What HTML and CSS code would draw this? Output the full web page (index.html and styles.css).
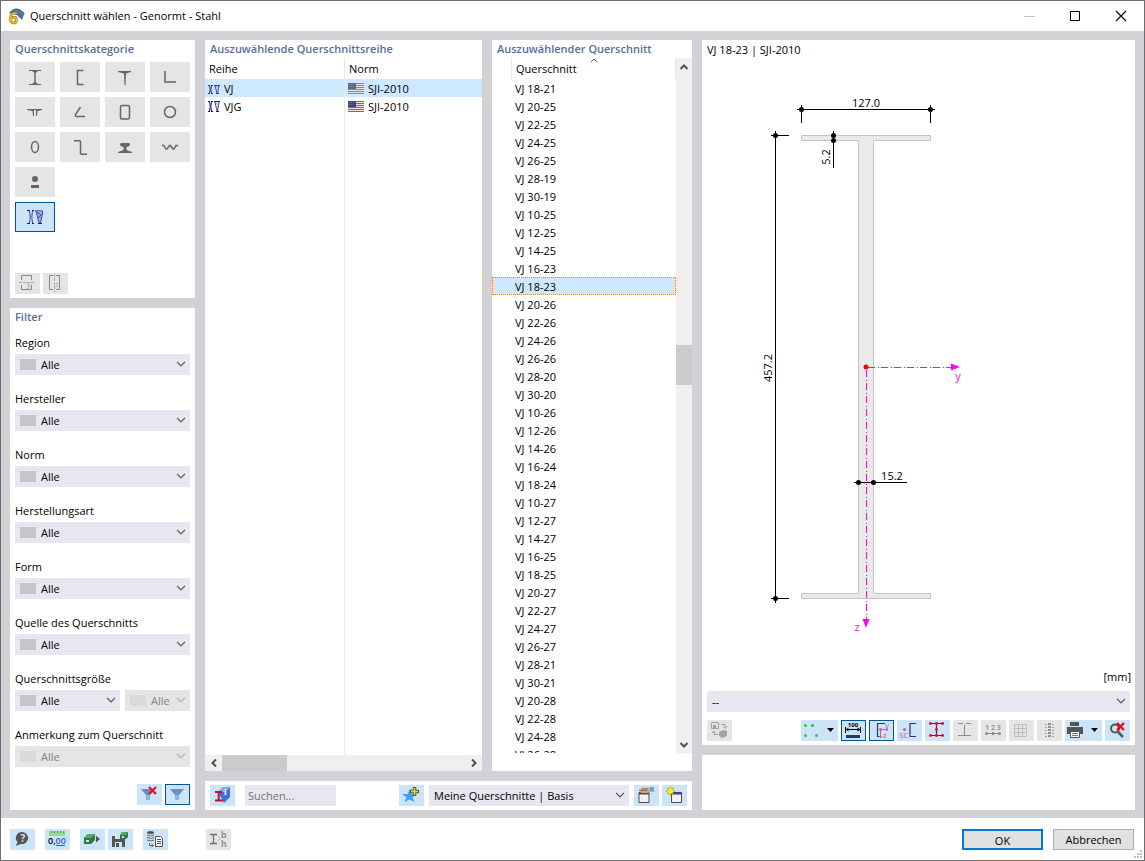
FILE: index.html
```html
<!DOCTYPE html>
<html lang="de">
<head>
    <meta charset="UTF-8">
    <meta name="viewport" content="width=device-width, initial-scale=1.0">
    <title>Querschnitt wählen - Genormt - Stahl</title>
    <link rel="stylesheet" href="styles.css">
</head>
<body>
    <svg class="defs" aria-hidden="true">
        <symbol id="chevron" viewBox="0 0 10 6"><path d="M1 .8 5 4.8 9 .8" fill="none" stroke="currentColor" stroke-width="1.2"/></symbol>
        <symbol id="arrow" viewBox="0 0 10 10"><path d="M1.5 7 5 3.500 8.500 7" fill="none" stroke="#505050" stroke-width="2"/></symbol>
        <symbol id="flag" viewBox="0 0 16 11">
            <path fill="#f3e3e6" d="M0 0h16v11H0z"/>
            <path stroke="#cf4653" d="M0 .5h16M0 2.500h16M0 4.500h16M0 6.500h16M0 8.500h16M0 10.500h16"/>
            <path fill="#3b4a7d" d="M0 0h8v6H0z"/>
            <path stroke="#66739c" stroke-dasharray="1 1" d="M1 1.500h6M1 3.500h6"/>
        </symbol>
        <symbol id="joist" viewBox="0 0 12 11" preserveAspectRatio="none">
            <path stroke="#14148c" fill="none" d="M0 .5h2M3 .5h2M0 10.500h2M3 10.500h2M6 .5h6M8 10.500h3"/>
            <path stroke="#14148c" fill="none" d="M1.500 1Q3 5.500 1.500 10M3.500 1Q2 5.500 3.500 10"/>
            <path stroke="#3c3ca4" fill="none" d="M7 1l2 9M11 1l-1.500 9"/>
            <path stroke="#8a92d4" fill="none" d="M8 1.500l2.500 3L8.500 7"/>
        </symbol>
    </svg>

    <div class="window">
        <header class="titlebar">
            <svg width="17" height="17" viewBox="0 0 17 17">
                <path d="M1 5Q8-4 16.500 5L14 12 9 7Z" fill="#3c68a8"/>
                <path d="M3 5Q9-1 15 7M8 2l6 7M11 1l5 6" stroke="#6d7f96" fill="none"/>
                <text x="1" y="16" class="six">6</text>
            </svg>
            <h1>Querschnitt wählen - Genormt - Stahl</h1>
            <button class="sys" aria-label="Minimieren"><svg width="12" height="12"><path d="M1 6.500h11" stroke="#c4c4c4"/></svg></button>
            <button class="sys" aria-label="Maximieren"><svg width="12" height="12"><path d="M1.500 1.500h9v9h-9z" fill="none" stroke="#000"/></svg></button>
            <button class="sys" aria-label="Schließen"><svg width="12" height="12"><path d="M1 1l10 10M11 1 1 11" stroke="#000" stroke-width="1.100"/></svg></button>
        </header>

        <main class="content">
            <div class="column">
                <section class="panel padded">
                    <h2>Querschnittskategorie</h2>
                    <div class="categories">
                        <button aria-label="I-Profil"><svg viewBox="0 0 40 30"><path d="M14 8.500h12M14 22.500h12" class="s"/><path d="M20 9v13" class="s w2"/><path d="M17 9h6l-2.500 2h-1zM17 22h6l-2.500-2h-1z" class="f"/></svg></button>
                        <button aria-label="U-Profil"><svg viewBox="0 0 40 30"><path d="M23.500 8.500h-6v14h6" class="s w2"/></svg></button>
                        <button aria-label="T-Profil"><svg viewBox="0 0 40 30"><path d="M13 9h13v1l-5 1.500-.5 11.500h-1L19 11.500 13 10z" class="f"/></svg></button>
                        <button aria-label="Winkel"><svg viewBox="0 0 40 30"><path d="M15 9v11h11" class="s w2"/></svg></button>
                        <button aria-label="Doppel-T"><svg viewBox="0 0 40 30"><path d="M12 12h15v1l-4.500 1-.5 5h-1v-6h-2v6h-1l-.5-5-5.500-1z" class="f"/></svg></button>
                        <button aria-label="Kantprofil"><svg viewBox="0 0 40 30"><path d="M20.500 10 15.500 17.500q-.5 2 1 2H25" class="s w2"/></svg></button>
                        <button aria-label="Hohlprofil"><svg viewBox="0 0 40 30"><rect x="15.500" y="8.500" width="9" height="13.500" rx="1.500" class="s w2"/></svg></button>
                        <button aria-label="Rohr"><svg viewBox="0 0 40 30"><circle cx="20" cy="15" r="5.500" class="s w2"/></svg></button>
                        <button aria-label="Ovalrohr"><svg viewBox="0 0 40 30"><ellipse cx="20" cy="15" rx="3.500" ry="5.500" class="s w2"/></svg></button>
                        <button aria-label="Z-Profil"><svg viewBox="0 0 40 30"><path d="M14 8.800h5.500q1 0 1 1v11.500q0 1 1 1H27" class="s w2"/></svg></button>
                        <button aria-label="Schiene"><svg viewBox="0 0 40 30"><path d="M16 11h8q1 0 1 1.500t-1.500 2L21.500 15v3l5.500 2v1H13v-1l5.500-2v-3L16.500 14.500Q15 14 15 12.500T16 11z" class="f"/></svg></button>
                        <button aria-label="Wellblech"><svg viewBox="0 0 40 30"><path d="M12 13.500h2l2 3.500h1l2.500-3.500h1L23 17h1l2-3.500H28" class="s w2"/></svg></button>
                        <button aria-label="Vollprofil"><svg viewBox="0 0 40 30"><circle cx="20" cy="12" r="3" class="f"/><path d="M16 18h8v3h-8z" class="f"/></svg></button>
                        <button aria-label="Stahlträger" class="newline active"><svg viewBox="0 0 40 30">
                            <path d="M14.500 9Q16 15 14.500 21M17.500 9Q16 15 17.500 21" stroke="#4148a8" fill="none"/>
                            <path d="M12 8.500h3M17 8.500h2M12 21.500h3M17 21.500h2M20 9h8M23 21.500h4" stroke="#14148c"/>
                            <path d="M21.500 9l2.500 12h2l1.500-12z" fill="#9aa4de"/>
                            <path d="M21 9l3 12M27.500 9v3l-2 9M22 10l4 3-3 3" stroke="#4148a8" fill="none"/>
                        </svg></button>
                    </div>
                    <div class="tools mirror">
                        <button class="tool off" disabled aria-label="Spiegeln y"><svg viewBox="0 0 25 21"><path d="M6.500 7V2.500h10V7M6.500 12v4.500h10V12" class="g dark"/><path d="M4 9.500h16" class="g" stroke-dasharray="3 1"/><text x="12" y="14" class="tiny">y</text></svg></button>
                        <button class="tool off" disabled aria-label="Spiegeln z"><svg viewBox="0 0 25 21"><path d="M10 2.500H6.500v14H10M13 2.500h3.500v14H13" class="g dark"/><path d="M11.500 1v18" class="g" stroke-dasharray="3 1"/><text x="12" y="14" class="tiny">z</text></svg></button>
                    </div>
                </section>

                <section class="panel padded filter">
                    <h2>Filter</h2>
                    <div class="field">
                        <label for="region">Region</label>
                        <div class="combo swatch"><select id="region"><option>Alle</option></select><svg><use href="#chevron"/></svg></div>
                    </div>
                    <div class="field">
                        <label for="hersteller">Hersteller</label>
                        <div class="combo swatch"><select id="hersteller"><option>Alle</option></select><svg><use href="#chevron"/></svg></div>
                    </div>
                    <div class="field">
                        <label for="norm">Norm</label>
                        <div class="combo swatch"><select id="norm"><option>Alle</option></select><svg><use href="#chevron"/></svg></div>
                    </div>
                    <div class="field">
                        <label for="art">Herstellungsart</label>
                        <div class="combo swatch"><select id="art"><option>Alle</option></select><svg><use href="#chevron"/></svg></div>
                    </div>
                    <div class="field">
                        <label for="form">Form</label>
                        <div class="combo swatch"><select id="form"><option>Alle</option></select><svg><use href="#chevron"/></svg></div>
                    </div>
                    <div class="field">
                        <label for="quelle">Quelle des Querschnitts</label>
                        <div class="combo swatch"><select id="quelle"><option>Alle</option></select><svg><use href="#chevron"/></svg></div>
                    </div>
                    <div class="field">
                        <label for="groesse">Querschnittsgröße</label>
                        <div class="pair">
                            <div class="combo swatch"><select id="groesse"><option>Alle</option></select><svg><use href="#chevron"/></svg></div>
                            <div class="combo swatch disabled"><select aria-label="Querschnittsgröße Wert" disabled><option>Alle</option></select><svg><use href="#chevron"/></svg></div>
                        </div>
                    </div>
                    <div class="field">
                        <label for="anmerkung">Anmerkung zum Querschnitt</label>
                        <div class="combo swatch disabled"><select id="anmerkung" disabled><option>Alle</option></select><svg><use href="#chevron"/></svg></div>
                    </div>
                    <div class="tools filter-tools">
                        <button class="tool" aria-label="Filter löschen"><svg viewBox="0 0 25 21"><path d="M4 5h14l-5 6v5h-4v-5z" fill="#6d8dc0"/><path d="M9 11h4v5H9z" fill="#8fb3e6"/><path d="M12 3l7 7M19 3l-7 7" stroke="#e8101c" stroke-width="2.200"/></svg></button>
                        <button class="tool active" aria-label="Filter"><svg viewBox="0 0 25 21"><path d="M5 5h14l-5 6v5h-4v-5z" fill="#6d8dc0"/><path d="M10 11h4v5h-4z" fill="#8fb3e6"/></svg></button>
                    </div>
                </section>
            </div>

            <div class="column">
                <div class="lists">
                    <section class="panel">
                        <h2 class="indent">Auszuwählende Querschnittsreihe</h2>
                        <table class="series">
                            <thead><tr><th>Reihe</th><th>Norm</th></tr></thead>
                            <tbody>
                                <tr class="selected">
                                    <td><svg width="12" height="9"><use href="#joist"/></svg>VJ</td>
                                    <td><svg width="16" height="11" class="tinted"><use href="#flag"/></svg>SJI-2010</td>
                                </tr>
                                <tr>
                                    <td><svg width="12" height="11"><use href="#joist"/></svg>VJG</td>
                                    <td><svg width="16" height="11"><use href="#flag"/></svg>SJI-2010</td>
                                </tr>
                                <tr class="rest"><td></td><td></td></tr>
                            </tbody>
                        </table>
                        <div class="scroll-x">
                            <button aria-label="Nach links"><svg class="left"><use href="#arrow"/></svg></button>
                            <div class="thumb"></div>
                            <div></div>
                            <button aria-label="Nach rechts"><svg class="right"><use href="#arrow"/></svg></button>
                        </div>
                    </section>

                    <section class="panel">
                        <h2 class="indent">Auszuwählender Querschnitt</h2>
                        <div class="list">
                            <div class="list-view">
                                <table class="sections">
                                    <thead><tr><th></th><th>Querschnitt<svg class="sort"><use href="#chevron"/></svg></th></tr></thead>
                                    <tbody id="rows"></tbody>
                                </table>
                            </div>
                            <div class="scroll-y">
                                <button aria-label="Nach oben"><svg><use href="#arrow"/></svg></button>
                                <div></div>
                                <div class="thumb"></div>
                                <div></div>
                                <button aria-label="Nach unten"><svg class="down"><use href="#arrow"/></svg></button>
                            </div>
                        </div>
                    </section>
                </div>

                <section class="panel searchbar">
                    <button class="tool" aria-label="Info"><svg viewBox="0 0 25 21"><path d="M8 7l5-5h7v10l-6 6z" fill="#3f6fd8"/><path d="M8 7l5-5h7l-4 5z" fill="#85a9ef"/><path d="M5 7h7M5 15.500h8M8.700 7v9" stroke="#c8141e" stroke-width="2" fill="none"/><text x="14" y="10" class="info">i</text></svg></button>
                    <input type="text" class="search" placeholder="Suchen..." aria-label="Suchen">
                    <button class="tool" aria-label="Favorit hinzufügen"><svg viewBox="0 0 25 21"><path d="M10.500 4l1.800 5H18l-4.500 3.200 2 5-5-3-5 3 1.800-5L3 9h5.700z" fill="#3ea2f4"/><path d="M15.500 2v9M11 6.500h9" stroke="#5e5724" stroke-width="3.400"/><path d="M15.500 3v7M12 6.500h7" stroke="#e6d65a" stroke-width="1.500"/></svg></button>
                    <div class="combo mine"><select aria-label="Meine Querschnitte"><option>Meine Querschnitte | Basis</option></select><svg><use href="#chevron"/></svg></div>
                    <button class="tool" aria-label="Bearbeiten"><svg viewBox="0 0 25 21"><path d="M5 7.500h10v10H5z" fill="#f2f2f2" stroke="#4d4d4d"/><path d="M5 8h10v1.500H5z" fill="#4d4d4d"/><path d="M5 5l4-2.500h6l3 1v3L13 8H7z" fill="#d3a58a"/><path d="M5 5.500h8M7 4h7" stroke="#9b6c55"/><path d="M16 2h4v5l-4-1z" fill="#6d9ed6"/></svg></button>
                    <button class="tool" aria-label="Neu"><svg viewBox="0 0 25 21"><path d="M9.500 7.500h10v10h-10z" fill="#f2f2f2" stroke="#4d4d4d"/><path d="M10 8.500h9" stroke="#3434c8" stroke-width="2"/><path d="M8.500 1.500v9M4 6h9M5.500 3l6 6M11.500 3l-6 6" stroke="#a89a1c" stroke-width="1.500"/><path d="M8.500 2.500v7M5 6h7M6.500 4l4 4M10.500 4l-4 4" stroke="#fff200" stroke-width="1.400"/></svg></button>
                </section>
            </div>

            <div class="column">
                <section class="panel preview">
                    <h3>VJ 18-23 | SJI-2010</h3>
                    <svg class="drawing" viewBox="702 60 433 608">
                        <path class="profile" d="M801.500 135.500h129v5h-57v453h57v5h-129v-5h57v-453h-57z"/>
                        <!-- flange width -->
                        <path class="dim" d="M797 109.500h138M801.500 105v18M930.500 105v18"/>
                        <circle cx="801.500" cy="109.500" r="2.500"/><circle cx="930.500" cy="109.500" r="2.500"/>
                        <text x="866" y="107">127.0</text>
                        <!-- height -->
                        <path class="dim" d="M775.500 131v472M771 135.500h18M771 598.500h18"/>
                        <circle cx="775.500" cy="135.500" r="2.500"/><circle cx="775.500" cy="598.500" r="2.500"/>
                        <text transform="translate(772 368) rotate(-90)">457.2</text>
                        <!-- flange thickness -->
                        <path class="dim" d="M833.500 131v37"/>
                        <circle cx="833.500" cy="135.500" r="2.500"/><circle cx="833.500" cy="140.500" r="2.500"/>
                        <text transform="translate(830 157) rotate(-90)">5.2</text>
                        <!-- axes -->
                        <path class="axis" d="M868 367.500h84M866.500 370v249"/>
                        <path class="head" d="M951 363.500v7l9-3.500zM862.500 619h7l-3.500 9z"/>
                        <circle cx="866" cy="367" r="2.500" class="origin"/>
                        <text x="958" y="380" class="axis-name">y</text>
                        <text x="857" y="631" class="axis-name">z</text>
                        <!-- web thickness -->
                        <path class="dim" d="M854 482.500h53"/>
                        <circle cx="858.500" cy="482.500" r="2.500"/><circle cx="873.500" cy="482.500" r="2.500"/>
                        <text x="892" y="480">15.2</text>
                    </svg>
                    <div class="unit">[mm]</div>
                    <div class="combo stress"><select aria-label="Darstellung"><option>--</option></select><svg><use href="#chevron"/></svg></div>
                    <div class="tools">
                        <button class="tool off" disabled aria-label="Ansicht wechseln"><svg viewBox="0 0 25 21"><path d="M4.500 2.500h7v6h-7z" fill="none" stroke="#a2a2a2"/><path d="M6 5h3v3H6zM12 12l4-2 4 1v5l-5 2-3-2z" fill="#a2a2a2"/><path d="M14 4.500h4V8M16 6.500l2 2 2-2M11 14.500H7V11M5 13l2-2 2 2" fill="none" stroke="#a2a2a2"/></svg></button>
                        <span class="space"></span>
                        <button class="tool wide" aria-label="Punkte"><svg viewBox="0 0 37 21"><g fill="#35c435"><circle cx="4.500" cy="5.500" r="1.500"/><circle cx="11.500" cy="5.500" r="1.500"/><circle cx="4.500" cy="15.500" r="1.500"/><circle cx="15.500" cy="15.500" r="1.500"/></g><path d="M26 8h7l-3.500 4z"/></svg></button>
                        <button class="tool active" aria-label="Bemaßung"><svg viewBox="0 0 25 21"><path d="M5 9.500h15M4.500 7v6M19.500 7v6" stroke="#000"/><path d="M4.500 9.500l3-2v4zM19.500 9.500l-3-2v4z"/><path d="M5 15h14v3H5z" fill="#2c3564"/><text x="12" y="7" class="num">100</text></svg></button>
                        <button class="tool active" aria-label="Achsen"><svg viewBox="0 0 25 21"><path d="M16 3.500H8.500v13H11" class="navy"/><path d="M11.500 9.500H19M11.500 9.500V18M17 8l2 1.500-2 1.500M10 16l1.500 2 1.500-2" stroke="#d4559a" fill="none"/><circle cx="11.500" cy="9.500" r="1.500" fill="#d4559a"/><text x="16" y="8" class="pink">y</text><text x="14" y="18" class="pink">z</text></svg></button>
                        <button class="tool" aria-label="Schubmittelpunkt"><svg viewBox="0 0 25 21"><path d="M19 3.500h-6v13h6" class="navy"/><circle cx="7.500" cy="9.500" r="1.500" fill="#d4559a"/><text x="2" y="18" class="pink">SC</text></svg></button>
                        <button class="tool" aria-label="Spannungspunkte"><svg viewBox="0 0 25 21"><path d="M5 3.500h14M5 15.500h14M11.500 3v13" class="navy"/><g fill="#f00"><circle cx="5.500" cy="3.500" r="1.400"/><circle cx="11.500" cy="3.500" r="1.400"/><circle cx="17.500" cy="3.500" r="1.400"/><circle cx="11.500" cy="9.500" r="1.400"/><circle cx="5.500" cy="15.500" r="1.400"/><circle cx="11.500" cy="15.500" r="1.400"/><circle cx="17.500" cy="15.500" r="1.400"/></g></svg></button>
                        <button class="tool off" disabled aria-label="c/t-Teile"><svg viewBox="0 0 25 21"><path d="M5 3.500h5M13 3.500h5M5 15.500h13M11.500 5v10" stroke="#8c8c8c" fill="none"/></svg></button>
                        <button class="tool off" disabled aria-label="Nummerierung"><svg viewBox="0 0 25 21"><path d="M4 13.500h16" stroke="#8c8c8c"/><path d="M5.500 12v3M12 12v3M18.500 12v3" stroke="#8c8c8c" stroke-width="2"/><text x="12" y="10" class="num light">1 2 3</text></svg></button>
                        <button class="tool off" disabled aria-label="Raster"><svg viewBox="0 0 25 21"><path d="M5.500 4.500h12v12h-12zM9.500 4v13M13.500 4v13M5 8.500h13M5 12.500h13" stroke="#bdbdbd" fill="none"/></svg></button>
                        <button class="tool off" disabled aria-label="Werte"><svg viewBox="0 0 25 21"><path d="M12.500 3v14" stroke="#909090" stroke-width="3" stroke-dasharray="2 1"/><path d="M8 4.500h2M8 7.500h2M8 10.500h2M8 13.500h2M8 16.500h2M15 4.500h2M15 7.500h2M15 10.500h2M15 13.500h2M15 16.500h2" stroke="#a2a2a2"/></svg></button>
                        <button class="tool wide" aria-label="Drucken"><svg viewBox="0 0 37 21"><path d="M5 2h9v4H5zM2 7h16v7H2z" fill="#555"/><path d="M5.500 11.500h9v6h-9z" fill="#fff" stroke="#555"/><path d="M7 13.500h6M7 15.500h6" stroke="#777"/><path d="M26 8h7l-3.500 4z"/></svg></button>
                        <button class="tool" aria-label="Zoom zurücksetzen"><svg viewBox="0 0 25 21"><circle cx="10" cy="8.500" r="4" fill="none" stroke="#555" stroke-width="2"/><path d="M13 12l5 5" stroke="#555" stroke-width="2.500"/><path d="M12 3l7 7M19 3l-7 7" stroke="#f00" stroke-width="2.300"/></svg></button>
                    </div>
                </section>
                <section class="panel notes"></section>
            </div>
        </main>

        <footer class="footer">
            <button class="tool" aria-label="Hilfe"><svg viewBox="0 0 25 21"><path d="M12.500 3a6.500 6 0 1 1-2 12L6 17l1.500-4A6.500 6 0 0 1 12.500 3z" fill="#555"/><text x="13" y="13" class="help">?</text></svg></button>
            <button class="tool gap-l" aria-label="Einheiten"><svg viewBox="0 0 25 21"><path d="M4 2h16v5H4z" fill="#93dd87"/><path d="M6.500 2v2M9.500 2v2M12.500 2v2M15.500 2v2M18.500 2v2" stroke="#57a94c"/><text x="3" y="15" class="units">0,<tspan fill="#2b62e0">00</tspan></text><path d="M11 16.500h9" stroke="#2b62e0"/></svg></button>
            <button class="tool gap-l" aria-label="Übernehmen"><svg viewBox="0 0 25 21"><path d="M4 9l4-4h7v6l-4 4H4z" fill="#2b7a41"/><path d="M8 5h7l-4 4H4z" fill="#59a86b"/><path d="M6 11h3v2H6z" fill="#cce4f7"/><path d="M16 6.500l4 3.500-4 3.500z" fill="#555"/></svg></button>
            <button class="tool" aria-label="Speichern"><svg viewBox="0 0 25 21"><path d="M4 7h12l1 1v10H4z" fill="#555"/><path d="M7 7h6v3H7zM7 13h7v5H7z" fill="#cce4f7"/><path d="M8 14h3v4H8z" fill="#555"/><path d="M12 6l2-3h6v5l-2 2h-6z" fill="#2b7a41"/><path d="M14 3h6l-2 3h-6z" fill="#59a86b"/><path d="M14 7h2v2h-2z" fill="#cce4f7"/></svg></button>
            <button class="tool gap-l" aria-label="Protokoll"><svg viewBox="0 0 25 21"><ellipse cx="7.500" cy="3.500" rx="3.500" ry="1.500" fill="#555"/><path d="M4 6q3.500 2 7 0M4 8.500q3.500 2 7 0M4 11q3.500 2 7 0M6.500 14v2.500H10M8.500 15l2 1.500-2 1.500" stroke="#666" fill="none"/><path d="M12.500 7.500h5l2 2v8h-7z" fill="#fff" stroke="#555"/><path d="M14 10.500h4M14 12.500h4M14 14.500h4" stroke="#555"/></svg></button>
            <button class="tool off gap-xl" disabled aria-label="Abmessungen"><svg viewBox="0 0 25 21"><path d="M4 5.500h7M4 14.500h7M7.500 5v10" stroke="#707070" fill="none" stroke-width="1.300"/><path d="M12 7l2.500 2.500L12 12" stroke="#b4b4b4" fill="none"/><text x="15" y="9" class="bh">b</text><text x="15" y="18" class="bh">h</text></svg></button>
            <span class="space"></span>
            <button class="dialog-button primary">OK</button>
            <button class="dialog-button">Abbrechen</button>
            <svg class="grip" viewBox="0 0 9 9"><path d="M6 0h2v2H6zM3 3h2v2H3zM6 3h2v2H6zM0 6h2v2H0zM3 6h2v2H3zM6 6h2v2H6z" fill="#bfbfbf"/></svg>
        </footer>
    </div>

    <script>
        const sections = [
            '18-21', '20-25', '22-25', '24-25', '26-25', '28-19', '30-19', '10-25', '12-25', '14-25',
            '16-23', '18-23', '20-26', '22-26', '24-26', '26-26', '28-20', '30-20', '10-26', '12-26',
            '14-26', '16-24', '18-24', '10-27', '12-27', '14-27', '16-25', '18-25', '20-27', '22-27',
            '24-27', '26-27', '28-21', '30-21', '20-28', '22-28', '24-28', '26-28'
        ];
        const rows = document.getElementById('rows');

        sections.forEach(name => {
            const row = rows.insertRow();
            row.insertCell();
            row.insertCell().textContent = 'VJ ' + name;
            if (name === '18-23') {
                row.className = 'selected';
            }
            row.addEventListener('click', () => {
                rows.querySelector('.selected').classList.remove('selected');
                row.classList.add('selected');
            });
        });
    </script>
</body>
</html>
```
FILE: styles.css
```css
* {
    box-sizing: border-box;
}
body {
    margin: 0;
    font-family: "Open Sans", "Noto Sans", sans-serif;
    font-size: 11px;
    line-height: 18px;
    color: #000;
}
h1, h2, h3 {
    margin: 0;
    font-size: 11px;
    font-weight: 400;
}
button, input, select {
    font: inherit;
    color: inherit;
    border: 0;
    border-radius: 0;
    margin: 0;
    padding: 0;
}
svg {
    display: block;
}
.defs {
    position: absolute;
    width: 0;
    height: 0;
}
.window {
    display: flex;
    flex-direction: column;
    height: 100vh;
    border: 1px solid #6e6e72;
    background: #fff;
}

/* title bar */
.titlebar {
    display: flex;
    align-items: center;
    flex: none;
    height: 30px;
    padding-left: 7px;
}
.titlebar h1 {
    flex: 1;
    margin-left: 5px;
}
.titlebar > svg {
    overflow: visible;
}
.six {
    font-size: 16px;
    font-weight: 700;
    fill: #f5c518;
    stroke: #7a6412;
    stroke-width: .5px;
}
.sys {
    display: flex;
    align-items: center;
    justify-content: center;
    width: 46px;
    height: 30px;
    background: none;
}

/* main area */
.content {
    display: grid;
    grid-template-columns: 185px 487px minmax(0, 1fr);
    gap: 10px;
    flex: 1;
    min-height: 0;
    padding: 9px 9px 8px;
    background: #d2d1d6;
}
.column {
    display: flex;
    flex-direction: column;
    gap: 10px;
    min-height: 0;
}
.panel {
    display: flex;
    flex-direction: column;
    min-height: 0;
    background: #fff;
}
.panel h2 {
    color: #5a6d98;
    font-weight: 600;
}
.indent {
    padding-left: 5px;
}
.padded {
    padding: 0 5px 4px;
}

/* categories */
.categories {
    display: grid;
    grid-template-columns: repeat(4, 1fr);
    gap: 5px;
    margin-top: 4px;
}
.categories button {
    height: 30px;
    background: #e5e5e5;
}
.categories svg {
    width: 100%;
    height: 100%;
}
.categories .newline {
    grid-column: 1;
}
.categories .active, .tool.active {
    background: #cce4f7;
    box-shadow: inset 0 0 0 1px #005499;
}
.s {
    fill: none;
    stroke: #666;
}
.w2 {
    stroke-width: 1.5px;
}
.f {
    fill: #666;
}
.g {
    fill: none;
    stroke: #aaa;
}
.dark {
    stroke: #888;
}

/* tool buttons */
.tools {
    display: flex;
    gap: 3px;
}
.tool {
    flex: none;
    width: 25px;
    height: 21px;
    background: #cce4f7;
}
.tool.wide {
    width: 37px;
}
.tool.off {
    background: #e5e5e5;
}
.tool svg {
    width: 100%;
    height: 100%;
}
.space {
    flex: 1;
}
.mirror {
    margin-top: 41px;
}
.tiny {
    font-size: 7px;
    fill: #aaa;
}
.num {
    font-size: 6px;
    font-weight: 700;
    text-anchor: middle;
}
.light {
    font-size: 7px;
    fill: #999;
}
.pink {
    font-size: 8px;
    fill: #d4559a;
}
.navy {
    fill: none;
    stroke: #2c3564;
    stroke-width: 1.2px;
}
.info {
    font: bold 9px "Liberation Serif", serif;
    fill: #fff;
}
.help {
    font-size: 10px;
    font-weight: 700;
    text-anchor: middle;
    fill: #cce4f7;
}
.units {
    font-size: 9px;
    font-weight: 600;
}
.bh {
    font: bold 9px "Liberation Sans", sans-serif;
    fill: #8a8a8a;
}

/* filter */
.filter {
    flex: 1;
    padding-bottom: 5px;
}
.filter h2 {
    margin-bottom: 8px;
}
.field {
    margin-bottom: 15px;
}
.field label {
    display: block;
    margin-bottom: 2px;
}
.pair {
    display: grid;
    grid-template-columns: 105fr 65fr;
    gap: 5px;
}
.filter-tools {
    justify-content: flex-end;
    margin-top: auto;
}

.combo {
    position: relative;
    height: 21px;
    color: #555;
}
.combo select {
    display: block;
    width: 100%;
    height: 100%;
    padding: 0 20px 0 5px;
    appearance: none;
    background: #e7e7f1;
    color: #000;
    opacity: 1;
}
.combo svg {
    position: absolute;
    right: 4px;
    top: 7px;
    width: 10px;
    height: 6px;
    pointer-events: none;
}
.combo.swatch select {
    padding-left: 26px;
}
.combo.swatch::before {
    content: "";
    position: absolute;
    left: 5px;
    top: 5px;
    width: 16px;
    height: 11px;
    background: #c6c6c8;
    pointer-events: none;
}
.combo.disabled {
    color: #b0b0b0;
}
.combo.disabled select {
    background: #e5e5e5;
    color: #838383;
}
.combo.disabled::before {
    background: #dadada;
}

/* lists */
.lists {
    display: grid;
    grid-template-columns: 277px minmax(0, 1fr);
    gap: 10px;
    flex: 1;
    min-height: 0;
}
table {
    width: 100%;
    border-collapse: separate;
    border-spacing: 0;
    table-layout: fixed;
}
th, td {
    height: 18px;
    padding: 0 0 0 4px;
    font-weight: 400;
    text-align: left;
}
th {
    height: 21px;
}
td {
    padding-top: 1px;
    line-height: 17px;
}
.selected {
    background: #cde8ff;
}
.series {
    flex: 1;
}
.series th:first-child {
    width: 139px;
}
.series th + th, .series td + td {
    border-left: 1px solid #e8e8e8;
}
.series td {
    padding-left: 3px;
}
.series td svg {
    display: inline-block;
    margin-right: 4px;
    vertical-align: -1px;
}
.series .tinted {
    opacity: .8;
}
.series .rest td {
    height: auto;
}
.list {
    display: flex;
    flex: 1;
    min-height: 0;
    margin-bottom: 18px;
}
.list-view {
    flex: 1;
    overflow: hidden;
}
.sections th:first-child {
    width: 19px;
}
.sections th + th {
    position: relative;
    border-left: 1px solid #e8e8e8;
    border-right: 1px solid #e8e8e8;
}
.sort {
    position: absolute;
    left: 48%;
    top: 0;
    width: 8px;
    height: 5px;
    color: #555;
    transform: scaleY(-1);
}
.sections .selected {
    outline: 1px dotted #ff7f00;
    outline-offset: -1px;
}
.scroll-x, .scroll-y {
    display: grid;
    background: #efefef;
}
.scroll-x {
    grid-template-columns: 17px 65fr 178fr 17px;
    height: 16px;
}
.scroll-y {
    grid-template-rows: 17px 270fr 40fr 351fr 17px;
    width: 16px;
}
.scroll-x button, .scroll-y button {
    display: flex;
    align-items: center;
    justify-content: center;
    background: none;
}
.scroll-x svg, .scroll-y svg {
    width: 10px;
    height: 10px;
}
.thumb {
    background: #cbcbcb;
}
.left {
    transform: rotate(-90deg);
}
.right {
    transform: rotate(90deg);
}
.down {
    transform: rotate(180deg);
}

/* search bar */
.searchbar {
    flex-direction: row;
    align-items: center;
    height: 29px;
    padding: 0 5px;
    gap: 3px;
}
.search {
    width: 91px;
    height: 21px;
    margin-left: 7px;
    margin-right: auto;
    padding: 0 3px;
    background: #e7e7f1;
}
.search::placeholder {
    color: #757575;
}
.mine {
    width: 200px;
    margin: 0 2px;
}

/* preview */
.preview {
    flex: 1;
    padding-bottom: 4px;
}
.preview h3 {
    padding-left: 5px;
    line-height: 20px;
}
.preview .tools {
    padding: 0 5px;
}
.drawing {
    flex: 1;
    width: 100%;
    min-height: 0;
}
.drawing text {
    font-size: 11px;
    text-anchor: middle;
}
.profile {
    fill: #eaeaea;
    stroke: #c4c4c4;
}
.dim {
    stroke: #000;
}
.axis {
    stroke: #f0f;
    stroke-dasharray: 7 3 1 2;
}
.head, .drawing .axis-name {
    fill: #f0f;
}
.origin {
    fill: #f00;
}
.unit {
    padding-right: 4px;
    text-align: right;
}
.stress {
    margin: 5px 5px 8px;
}
.notes {
    height: 55px;
}

/* footer */
.footer {
    position: relative;
    display: flex;
    align-items: center;
    gap: 3px;
    flex: none;
    height: 42px;
    padding: 0 10px 0 9px;
}
.gap-l {
    margin-left: 7px;
}
.gap-xl {
    margin-left: 35px;
}
.dialog-button {
    width: 81px;
    height: 21px;
    margin-left: 7px;
    border: 1px solid #adadad;
    background: #e1e1e1;
    line-height: 19px;
}
.dialog-button.primary {
    border: 2px solid #0078d7;
}
.grip {
    position: absolute;
    right: 1px;
    bottom: 1px;
    width: 9px;
    height: 9px;
}
```
